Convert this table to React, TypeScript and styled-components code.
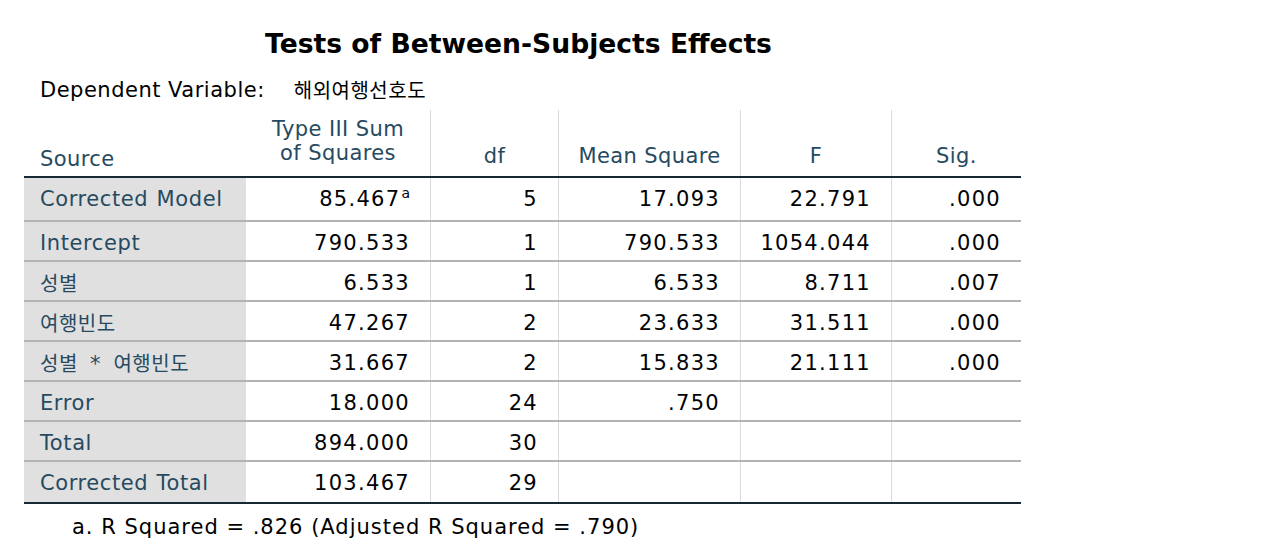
import * as React from 'react'
import styled, { createGlobalStyle, css } from 'styled-components'

const GlobalStyle = createGlobalStyle`
  html, body {
    margin: 0;
    padding: 0;
    background: #ffffff;
  }
  body {
    font-family: 'DejaVu Sans', 'Noto Sans CJK KR', sans-serif;
  }
`

const LABEL = '#264a60'
const COLUMNS = '222px 184px 128px 182px 151px 130px'

type Row = {
  source: React.ReactNode
  sum: string
  note?: string
  df: string
  ms: string
  f: string
  sig: string
}

function Hangul({ children, $size }: { children: React.ReactNode; $size?: number }) {
  return <HangulText $size={$size}>{children}</HangulText>
}

const HangulText = styled.span<{ $size?: number }>`
  font-family: 'Noto Sans CJK KR', sans-serif;
  font-size: ${(p) => p.$size ?? 20}px;
  letter-spacing: 0.5px;
`

const Cross = styled.span`
  padding: 0 4px;
`

const rows: Row[] = [
  { source: 'Corrected Model', sum: '85.467', note: 'a', df: '5', ms: '17.093', f: '22.791', sig: '.000' },
  { source: 'Intercept', sum: '790.533', df: '1', ms: '790.533', f: '1054.044', sig: '.000' },
  { source: <Hangul>성별</Hangul>, sum: '6.533', df: '1', ms: '6.533', f: '8.711', sig: '.007' },
  { source: <Hangul>여행빈도</Hangul>, sum: '47.267', df: '2', ms: '23.633', f: '31.511', sig: '.000' },
  {
    source: (
      <>
        <Hangul>성별</Hangul>
        <Cross> * </Cross>
        <Hangul>여행빈도</Hangul>
      </>
    ),
    sum: '31.667',
    df: '2',
    ms: '15.833',
    f: '21.111',
    sig: '.000',
  },
  { source: 'Error', sum: '18.000', df: '24', ms: '.750', f: '', sig: '' },
  { source: 'Total', sum: '894.000', df: '30', ms: '', f: '', sig: '' },
  { source: 'Corrected Total', sum: '103.467', df: '29', ms: '', f: '', sig: '' },
]

const Page = styled.div`
  width: 1280px;
  height: 557px;
  overflow: hidden;
  background: #ffffff;
`

const Output = styled.div`
  width: 997px;
  margin-left: 24px;
  padding-top: 28px;
`

const Title = styled.div`
  font-size: 26.6px;
  line-height: 32px;
  font-weight: bold;
  color: #000;
  text-align: center;
  padding-right: 8px;
`

const DepVar = styled.div`
  margin-top: 18px;
  padding-left: 16px;
  height: 26px;
  font-size: 21px;
  line-height: 24px;
  letter-spacing: 0.5px;
  color: #000;
  display: flex;
  gap: 29px;
`

const Table = styled.div`
  margin-top: 6px;
`

const HeaderRow = styled.div`
  display: grid;
  grid-template-columns: ${COLUMNS};
  height: 66px;
  border-bottom: 2px solid #152935;
`

const BodyRow = styled.div<{ $tall?: boolean; $last?: boolean }>`
  display: grid;
  grid-template-columns: ${COLUMNS};
  height: ${(p) => (p.$tall ? 42 : 38)}px;
  ${(p) =>
    p.$last
      ? css`
          height: 40px;
          border-bottom: 2px solid #152935;
        `
      : css`
          border-bottom: 2px solid #b3b3b3;
        `}
`

const HeadCell = styled.div<{ $ruled?: boolean; $pad?: number }>`
  display: flex;
  align-items: flex-end;
  justify-content: center;
  text-align: center;
  font-size: 21px;
  line-height: 24px;
  letter-spacing: 0.4px;
  color: ${LABEL};
  padding-bottom: ${(p) => p.$pad ?? 8}px;
  border-left: ${(p) => (p.$ruled ? '1px solid #dadada' : 'none')};
`

const CornerCell = styled(HeadCell)`
  justify-content: flex-start;
  padding-left: 16px;
`

const LabelCell = styled.div`
  background: #e0e0e0;
  padding: 9px 0 0 16px;
  font-size: 21px;
  line-height: 24px;
  letter-spacing: 0.6px;
  word-spacing: 1px;
  color: ${LABEL};
  white-space: nowrap;
`

const ValueCell = styled.div<{ $ruled?: boolean }>`
  padding: 9px 20px 0 0;
  text-align: right;
  font-size: 21px;
  line-height: 24px;
  letter-spacing: 1.3px;
  color: #010205;
  white-space: nowrap;
  border-left: ${(p) => (p.$ruled ? '1px solid #dadada' : 'none')};
`

const Note = styled.sup`
  font-size: 14px;
  letter-spacing: 0;
  vertical-align: 8px;
  line-height: 0;
  margin-left: 1px;
`

const Footnote = styled.div`
  margin-top: 11px;
  padding-left: 48px;
  font-size: 21px;
  line-height: 24px;
  letter-spacing: 1px;
  color: #000;
`

export default function App() {
  return (
    <Page>
      <GlobalStyle />
      <Output>
        <Title>Tests of Between-Subjects Effects</Title>
        <DepVar>
          <span>Dependent Variable:</span>
          <Hangul $size={20}>해외여행선호도</Hangul>
        </DepVar>
        <Table>
          <HeaderRow>
            <CornerCell $pad={5}>Source</CornerCell>
            <HeadCell $pad={11}>
              Type III Sum
              <br />
              of Squares
            </HeadCell>
            <HeadCell $ruled>df</HeadCell>
            <HeadCell $ruled>Mean Square</HeadCell>
            <HeadCell $ruled>F</HeadCell>
            <HeadCell $ruled>Sig.</HeadCell>
          </HeaderRow>
          {rows.map((row, i) => (
            <BodyRow key={i} $tall={i === 0} $last={i === rows.length - 1}>
              <LabelCell>{row.source}</LabelCell>
              <ValueCell>
                {row.sum}
                {row.note && <Note>{row.note}</Note>}
              </ValueCell>
              <ValueCell $ruled>{row.df}</ValueCell>
              <ValueCell $ruled>{row.ms}</ValueCell>
              <ValueCell $ruled>{row.f}</ValueCell>
              <ValueCell $ruled>{row.sig}</ValueCell>
            </BodyRow>
          ))}
        </Table>
        <Footnote>a. R Squared = .826 (Adjusted R Squared = .790)</Footnote>
      </Output>
    </Page>
  )
}
